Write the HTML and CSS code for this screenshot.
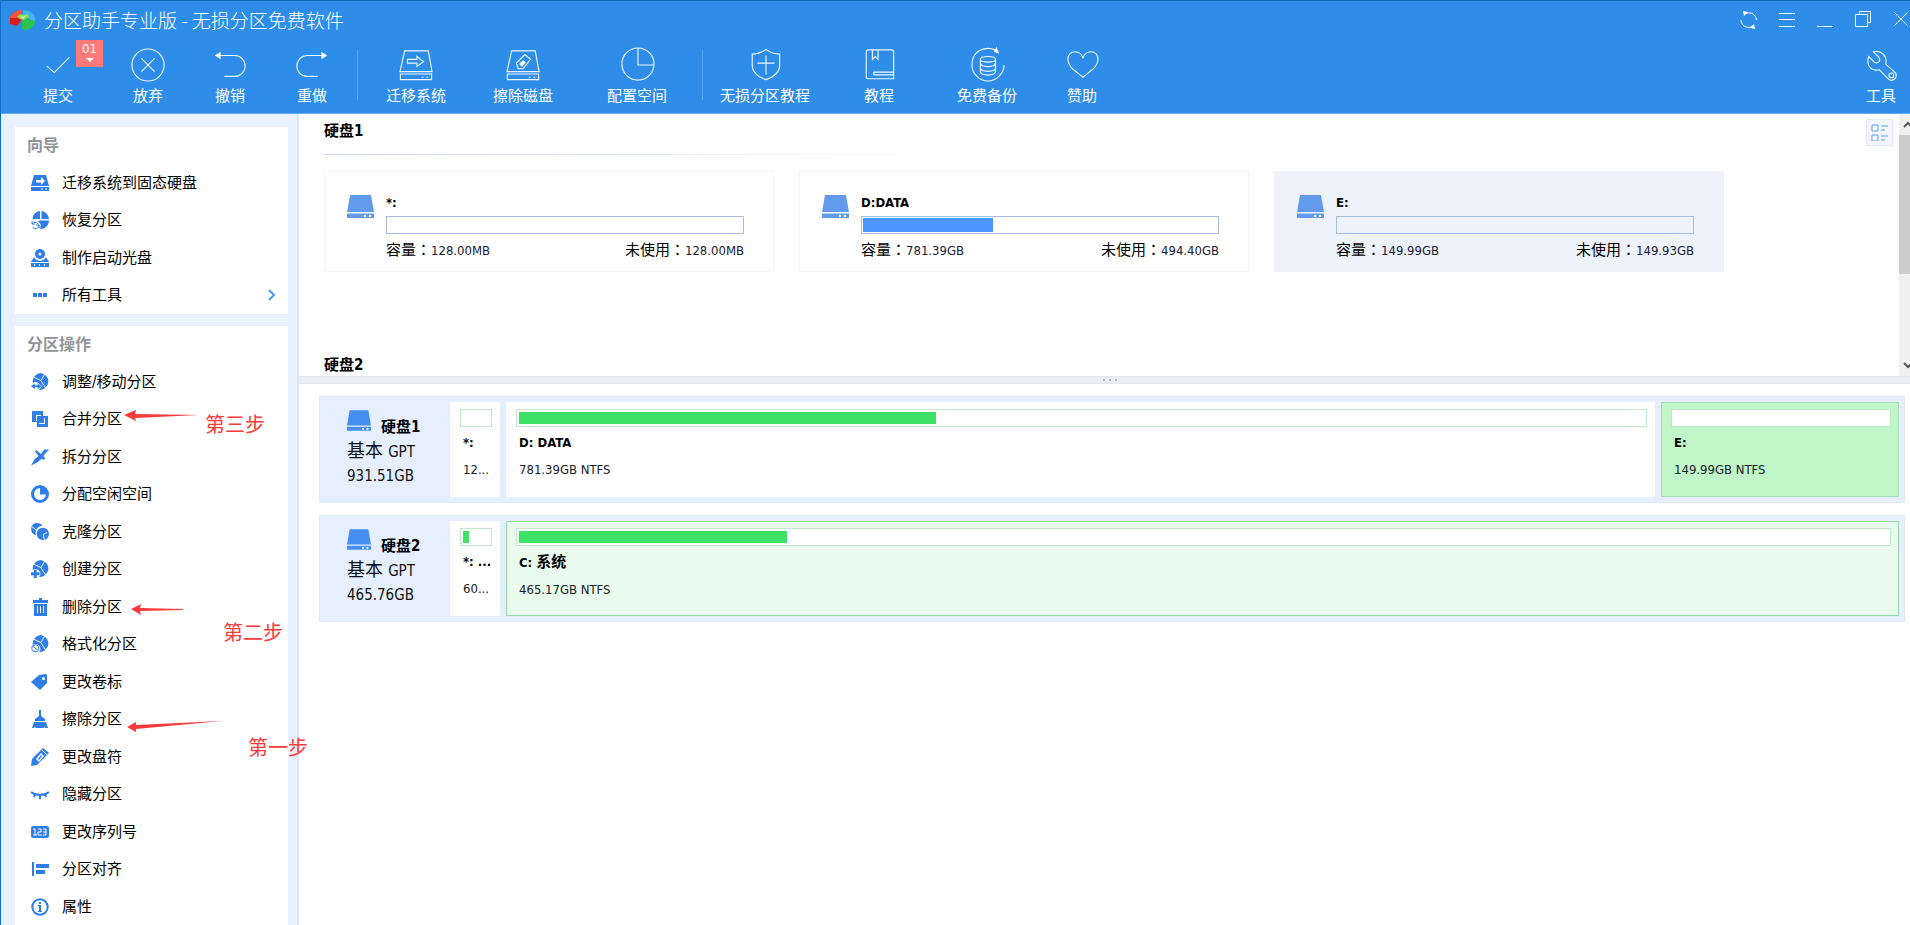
FILE: index.html
```html
<!DOCTYPE html>
<html lang="zh-CN">
<head>
<meta charset="utf-8">
<title>分区助手专业版 - 无损分区免费软件</title>
<link rel="stylesheet" href="styles.css">
</head>
<body>
<svg class="defs" aria-hidden="true">
  <symbol id="drive" viewBox="0 0 27 23"><path fill="currentColor" d="M3 0h21l3 17H0zM0 18.500h27V23H0z"/><path fill="#fff" d="M17 20h2v2h-2zM22 20h2v2h-2z"/></symbol>
  <symbol id="pie" viewBox="0 0 19 19"><path fill="currentColor" d="M10 0a9 9 0 1 1-1.500 18A5 5 0 0 0 2 10.500 9 9 0 0 1 10 0z"/><path d="M14.500 1L10.500 8l3 5 3 4M10.500 8L2 4" fill="none" stroke="#fff" stroke-width="1"/></symbol>
</svg>
<div class="window">
  <header class="header">
    <div class="titlebar">
      <svg class="logo" viewBox="0 0 26 22"><path fill="#d91c1c" d="M0 9C1 4 6 1 12 1v9l-5 7-7-2z"/><path fill="#f4553f" d="M0 9C1 4 6 1 12 1v5L6 9z"/><path fill="#41b4f2" d="M13 1c7 0 12 4 12 9v3l-6-3-6-4z"/><path fill="#2bc24a" d="M13 9l12 3c0 5-4 8-10 9l-3-1v-6z"/><path fill="#8ae04f" d="M7 8l3-3 4 1 4-1 1 3-5 3-4-1z"/><path fill="#e9fbd0" d="M10 7l3 1 3-2-3 4z"/></svg>
      <h1 class="title">分区助手专业版 - 无损分区免费软件</h1>
      <div class="controls">
        <button class="ctl" aria-label="刷新"><svg viewBox="0 0 18 18"><path d="M6 2.500A7.500 7.500 0 0 1 16.500 9M1 9a7.500 7.500 0 0 0 11 6.500"/><path class="solid" d="M3 0l5 1-4 4zM15 18l-5-1 4-4z"/></svg></button>
        <button class="ctl" aria-label="菜单"><svg viewBox="0 0 18 18"><path d="M1 2.500h16M1 8.500h16M1 15.500h16"/></svg></button>
        <button class="ctl" aria-label="最小化"><svg viewBox="0 0 18 18"><path d="M1 15.500h16"/></svg></button>
        <button class="ctl" aria-label="还原"><svg viewBox="0 0 18 18"><path d="M1.500 3.500h12v12h-12zM5.500 3.500v-3h11v11h-3"/></svg></button>
        <button class="ctl" aria-label="关闭"><svg viewBox="0 0 18 18"><path d="M2.500 1.500l13 13M15.500 1.500l-13 13"/></svg></button>
      </div>
    </div>
    <nav class="toolbar">
      <button class="tool"><svg viewBox="0 0 36 36"><path d="M6 19l8 7 16-16"/></svg>提交<span class="badge">01<i></i></span></button>
      <button class="tool"><svg viewBox="0 0 36 36"><circle cx="18" cy="18" r="17"/><path d="M11 11l14 14M25 11L11 25"/></svg>放弃</button>
      <button class="tool"><svg viewBox="0 0 36 36"><path d="M6 8h17a11 11 0 0 1 0 22H12"/><path class="solid" d="M2 8l6-4v8z"/></svg>撤销</button>
      <button class="tool"><svg viewBox="0 0 36 36"><path d="M30 8H13a11 11 0 0 0 0 22h11"/><path class="solid" d="M34 8l-6-4v8z"/></svg>重做</button>
      <span class="divider"></span>
      <button class="tool"><svg viewBox="0 0 36 36"><path d="M6 3h25l4 22H1zM1.500 27.500h33v6h-33zM9 12h10V9l7 5.500-7 5V16H9zM24 31h2M29 31h2"/></svg>迁移系统</button>
      <button class="tool"><svg viewBox="0 0 36 36"><path d="M6 3h25l4 22H1zM1.500 27.500h33v6h-33zM11 16l9-9 6 5-8 10h-5zM24 31h2M29 31h2"/><path class="solid" d="M14 17l4-4 3 2-4 5z"/></svg>擦除磁盘</button>
      <button class="tool"><svg viewBox="0 0 36 36"><circle cx="19" cy="17" r="17"/><path d="M19 0v18h17"/></svg>配置空间</button>
      <span class="divider"></span>
      <button class="tool"><svg viewBox="0 0 36 36"><path d="M19 1.500c4 3 8 5 14.500 5v12c0 7-6 12-14.500 15-8.500-3-14.500-8-14.500-15v-12C11 6.500 15 4.500 19 1.500zM19 8v20M10 16h18"/></svg>无损分区教程</button>
      <button class="tool"><svg viewBox="0 0 36 36"><path d="M33.500 25V4q0-2-2-2h-25q-2 0-2 2v27q0 1.500 2 1.500h27v-7h-21v3h21M11 2v10l3-3 3 3V2"/></svg>教程</button>
      <button class="tool"><svg viewBox="0 0 36 36"><path d="M27 2C13-3 2 5 2 18c0 9 8 17 17 17s17-8 17-17"/><path class="solid" d="M25 4l3-5 3 7z"/><path d="M11 12v13c0 5 16 5 16 0V12c0-4-16-4-16 0 0 4 16 4 16 0M11 16c0 5 16 5 16 0M11 21c0 5 16 5 16 0"/></svg>免费备份</button>
      <button class="tool"><svg viewBox="0 0 36 36"><path d="M19 11C17 2 4 1 3 12c0 8 8 12 16 19 8-7 16-11 16-19C34 1 21 2 19 11z"/></svg>赞助</button>
      <span></span>
      <button class="tool"><svg viewBox="0 0 36 36"><path d="M10 4c8-2 15 4 13 13l10 9a5 5 0 0 1-7 7l-10-10C7 25 2 18 5 9l6 6c4 2 7-1 5-5z"/><circle cx="29" cy="29" r="2.500"/></svg>工具</button>
    </nav>
  </header>

  <div class="body">
    <aside class="sidebar">
      <section class="panel wizard">
        <h2 class="panel-title">向导</h2>
        <ul class="menu">
          <li><button class="item"><svg viewBox="0 0 18 18"><path d="M3 1h12l3 11H0zM0 13h18v4H0z"/><path class="cut" d="M5 6h5V3l4 4-4 4V8.500H5zM10 14.500h2v1h-2zM14 14.500h2v1h-2z"/></svg>迁移系统到固态硬盘</button></li>
          <li><button class="item"><svg viewBox="0 0 18 18"><path d="M9 0v8H1.500A8 8 0 0 1 9 0zM10.500 0A8.500 8.500 0 0 1 18 8h-7.500zM18 9.500A8.500 8.500 0 0 1 9 18l1-4-3-4 2-.5z"/><path class="line" d="M1 13a3.500 3.500 0 0 1 6 0M8 14a3.500 3.500 0 0 1-6.500 2M1 10v3h3M8 17v-3H5"/></svg>恢复分区</button></li>
          <li><button class="item"><svg viewBox="0 0 18 18"><circle cx="9" cy="5" r="5"/><path d="M3 8c2 5 10 5 12 0l3 5H0zM0 14h18v4H0z"/><path class="cut" d="M3 15h1v2H3zM8 15h1v2H8zM13 15h1v2h-1z"/><circle class="cut" cx="9" cy="5" r="1.500"/></svg>制作启动光盘</button></li>
          <li><button class="item"><svg viewBox="0 0 18 18"><path d="M2 7h4v4H2zM7 7h4v4H7zM12 7h4v4h-4z"/></svg>所有工具<svg class="chevron" viewBox="0 0 8 12"><path d="M1 1l5 5-5 5"/></svg></button></li>
        </ul>
      </section>
      <section class="panel">
        <h2 class="panel-title">分区操作</h2>
        <ul class="menu">
          <li><button class="item"><svg viewBox="0 0 19 19"><use href="#pie"/><path class="halo" d="M0 14l4-3v2h3v-2l4 3-4 3v-2H4v2z"/></svg>调整/移动分区</button></li>
          <li><button class="item"><svg viewBox="0 0 18 18"><path d="M1 1h11v11H1z"/><path d="M6 6h11v11H6z"/><path class="cut" d="M5 5h5v1H6v5H5zM13 8v5H8v1h6V8z"/></svg>合并分区</button></li>
          <li><button class="item"><svg viewBox="0 0 19 18"><path d="M14 1h5l-8 9-2-2zM4 3l2-1 9 8-1 2-3-1-5 4-6 3 4-7 4-3z"/></svg>拆分分区</button></li>
          <li><button class="item"><svg viewBox="0 0 18 18"><circle cx="9" cy="9" r="9"/><path class="cut" d="M9 3a6 6 0 1 0 6 6.500H9z"/></svg>分配空闲空间</button></li>
          <li><button class="item"><svg viewBox="0 0 19 19"><path d="M6 0c3 0 5 1 6 3-4 0-8 4-7 10C-2 11-1 0 6 0z"/><circle cx="12.500" cy="11.500" r="6.500"/><path class="cutline" d="M1 4l5 4M13 12l4-2M13 12l1 5"/></svg>克隆分区</button></li>
          <li><button class="item"><svg viewBox="0 0 19 19"><use href="#pie"/><path class="halo" d="M3 10h3v3h3v3H6v3H3v-3H0v-3h3z"/></svg>创建分区</button></li>
          <li><button class="item"><svg viewBox="0 0 18 18"><path d="M8 0h3v2h6v3H2V2h6zM3 6h13v12H3z"/><path class="cutline" d="M6.500 8v7M9.500 8v7M12.500 8v7"/></svg>删除分区</button></li>
          <li><button class="item"><svg viewBox="0 0 19 19"><use href="#pie"/><circle class="disc" cx="4.500" cy="14" r="3.800"/><path class="line" d="M2 12l5 4"/></svg>格式化分区</button></li>
          <li><button class="item"><svg viewBox="0 0 18 18"><path d="M8 2l7-1 1 1v8l-7 7-9-8z"/><circle class="cut" cx="12.500" cy="5.500" r="1.500"/></svg>更改卷标</button></li>
          <li><button class="item"><svg viewBox="0 0 18 18"><path d="M8 0h2v6l4 3v2H4V9l4-3zM3 12h12l2 6h-3l-1-2v2H5l-1-1-1 1H1z"/></svg>擦除分区</button></li>
          <li><button class="item"><svg viewBox="0 0 18 18"><path d="M12 0l6 5L6 17l-6 1 1-7z"/><path class="cut" d="M10 5l3 3-5 6-3-3z"/><path d="M10 7l1 1-3 4-1-1z"/><path class="cutline" d="M11 2l5 5"/></svg>更改盘符</button></li>
          <li><button class="item"><svg viewBox="0 0 18 18"><path class="ring" d="M0 7c5 4 13 4 18 0M4 9l-1 3M14 9l1 3M9 10v4"/></svg>隐藏分区</button></li>
          <li><button class="item"><svg viewBox="0 0 18 18"><rect y="3" width="18" height="12" rx="2"/><path class="cutline" d="M2 6h2v6M2 12h4M7 6h3v3H7v3h4M12 6h3v6h-3M12 9h3"/></svg>更改序列号</button></li>
          <li><button class="item"><svg viewBox="0 0 18 18"><path d="M1 2h2v14H1zM5 4h13v4H5zM5 10h9v4H5z"/></svg>分区对齐</button></li>
          <li><button class="item"><svg viewBox="0 0 18 18"><circle class="ring" cx="9" cy="9" r="7.700"/><path d="M8 4h2v2H8zM7 7h3v6h1v1H7v-1h1V8H7z"/></svg>属性</button></li>
        </ul>
      </section>
    </aside>

    <main class="main">
      <section class="overview">
        <div class="disks">
          <h2 class="disk-title">硬盘1</h2>
          <div class="cards">
            <article class="card">
              <svg class="card-icon"><use href="#drive"/></svg>
              <div class="card-body"><h3 class="name">*:</h3><div class="track"></div>
                <p class="stats"><span>容量<b lang="zh-TW">：</b><em>128.00MB</em></span><span>未使用<b lang="zh-TW">：</b><em>128.00MB</em></span></p></div>
            </article>
            <article class="card">
              <svg class="card-icon"><use href="#drive"/></svg>
              <div class="card-body"><h3 class="name">D:DATA</h3><div class="track"><div class="fill" style="width:36.700%"></div></div>
                <p class="stats"><span>容量<b lang="zh-TW">：</b><em>781.39GB</em></span><span>未使用<b lang="zh-TW">：</b><em>494.40GB</em></span></p></div>
            </article>
            <article class="card selected">
              <svg class="card-icon"><use href="#drive"/></svg>
              <div class="card-body"><h3 class="name">E:</h3><div class="track"></div>
                <p class="stats"><span>容量<b lang="zh-TW">：</b><em>149.99GB</em></span><span>未使用<b lang="zh-TW">：</b><em>149.93GB</em></span></p></div>
            </article>
          </div>
          <h2 class="disk-title">硬盘2</h2>
        </div>
        <button class="view" aria-label="视图"><svg viewBox="0 0 17 17"><path d="M1 1h6v6H1zM1 11h6v6H1zM10 2h7M10 6h4M10 12h7M10 16h4"/></svg></button>
        <div class="scroll"><svg viewBox="0 0 11 21"><path d="M5 13l4-4 4 4"/></svg><div class="thumb"></div><svg viewBox="0 0 11 21"><path d="M5 8l4 4 4-4"/></svg></div>
      </section>
      <div class="splitter"><i></i><i></i><i></i></div>
      <section class="maps">
        <div class="map">
          <div class="info">
            <h3 class="info-name"><svg class="info-icon"><use href="#drive"/></svg>硬盘1</h3>
            <p class="kind">基本 <em>GPT</em></p><p class="size">931.51GB</p>
          </div>
          <div class="seg tiny"><div class="bar"></div><h4 class="name">*:</h4><p>12...</p></div>
          <div class="seg data"><div class="bar"><div class="used" style="width:37.100%"></div></div><h4 class="name">D: DATA</h4><p>781.39GB NTFS</p></div>
          <div class="seg extra active"><div class="bar"></div><h4 class="name">E:</h4><p>149.99GB NTFS</p></div>
        </div>
        <div class="map">
          <div class="info">
            <h3 class="info-name"><svg class="info-icon"><use href="#drive"/></svg>硬盘2</h3>
            <p class="kind">基本 <em>GPT</em></p><p class="size">465.76GB</p>
          </div>
          <div class="seg tiny"><div class="bar"><div class="used" style="width:22%"></div></div><h4 class="name">*: ...</h4><p>60...</p></div>
          <div class="seg data system"><div class="bar"><div class="used" style="width:19.600%"></div></div><h4 class="name">C: <span class="cn">系统</span></h4><p>465.17GB NTFS</p></div>
        </div>
      </section>
    </main>
  </div>

  <svg class="arrow third" viewBox="0 0 76 12"><path d="M0 5l12-5-1 4 64 1-64 3 1 3z"/></svg><span class="note note-third">第三步</span>
  <svg class="arrow second" viewBox="0 0 76 12"><path d="M0 6l10-5-1 4 43 1v1L9 8l1 4z"/></svg><span class="note note-second">第二步</span>
  <svg class="arrow first" viewBox="0 0 96 12"><path d="M0 7l9-5v3l86-4L9 9v3z"/></svg><span class="note note-first">第一步</span>
</div>
</body>
</html>
```
FILE: styles.css
```css
* { box-sizing: border-box; }
body, h1, h2, h3, h4, p, ul { margin: 0; padding: 0; }
body { font: 15px/20px "DejaVu Sans Condensed", "Noto Sans CJK SC", sans-serif; color: #000; background: #fff; }
ul { list-style: none; }
em { font-style: normal; }
button { font: inherit; color: inherit; background: none; border: 0; padding: 0; }
.defs { position: absolute; width: 0; height: 0; }

.window { position: relative; height: 100vh; overflow: hidden; display: flex; flex-direction: column; border-left: 1px solid #0d70c4; }

.header { background: #2e8de8; color: #fff; border-top: 1px solid #0c69b8; border-bottom: 1px solid #62adf5; }
.titlebar { display: flex; align-items: center; height: 38px; padding-left: 9px; }
.logo { width: 26px; height: 22px; }
.title { margin-left: 8px; font: 300 19px/28px "Noto Sans CJK SC", sans-serif; flex: 1; }
.controls { display: flex; gap: 20px; }
.ctl { width: 18px; height: 18px; }
.ctl svg { display: block; width: 18px; height: 18px; fill: none; stroke: #fff; }
.header .solid { fill: #fff; stroke: none; }

.toolbar { display: grid; grid-template-columns: 90px 90px 74px 90px 1px 116px 98px 130px 1px 124px 104px 112px 78px 1fr 58px; padding-left: 12px; height: 74px; }
.tool { position: relative; display: flex; flex-direction: column; align-items: center; justify-content: flex-start; gap: 4px; padding-top: 9px; white-space: nowrap; }
.tool svg { width: 34px; height: 34px; overflow: visible; fill: none; stroke: #eef7ff; stroke-width: 1.2; }
.divider { background: #5aa6f0; height: 50px; margin-top: 11px; }
.badge { position: absolute; left: 63px; top: 1px; width: 27px; height: 27px; background: #fd7a78; font-size: 13px; line-height: 17px; }
.badge i { display: block; width: 8px; margin: 1px auto 0; border: 4px solid transparent; border-top-color: #fff; border-bottom: 0; }

.body { flex: 1; min-height: 0; display: flex; }
.sidebar { width: 298px; padding: 13px 9px 0 14px; background: #e9f1fe; border-right: 2px solid #dfe6f3; display: flex; flex-direction: column; gap: 12px; overflow: hidden; }
.panel { background: #fff; flex: none; padding-bottom: 20px; }
.wizard { padding-bottom: 0; }
.panel-title { font-size: 16px; line-height: 20px; font-weight: 700; color: #909599; padding: 9px 12px 8px; }
.menu li { height: 37px; }
.menu li:nth-child(even) { height: 38px; }
.item { display: flex; align-items: center; gap: 13px; width: 100%; height: 100%; padding: 0 12px 0 16px; text-align: left; }
.item svg { width: 18px; height: 18px; fill: #2f7de8; color: #2f7de8; overflow: visible; }
.item .cut { fill: #fff; }
.item .cutline { fill: none; stroke: #fff; stroke-width: 1; }
.item .line { fill: none; stroke: #2f7de8; stroke-width: 1; }
.item .ring { fill: none; stroke: #2f7de8; stroke-width: 2; }
.item .halo { stroke: #fff; stroke-width: 1; paint-order: stroke; }
.item .disc { fill: #fff; stroke: #2f7de8; }
.item .chevron { width: 8px; height: 12px; margin-left: auto; fill: none; stroke: #479bf8; stroke-width: 2; }

.main { flex: 1; min-width: 0; display: flex; flex-direction: column; }
.overview { display: flex; align-items: flex-start; height: 262px; overflow: hidden; }
.disks { flex: 1; padding: 7px 0 0 25px; }
.disk-title { font-size: 15px; line-height: 20px; }
.cards { display: flex; gap: 25px; padding: 17px 0 83px; margin-top: 13px; background: linear-gradient(90deg, #c8d5ea, #fff) 0 0 / 640px 1px no-repeat; }
.card { display: flex; gap: 12px; width: 450px; height: 101px; padding: 22px 29px 0 22px; border: 1px solid #f3f5fb; }
.selected { background: #edf2fb; border-color: #edf2fb; }
.card-icon { width: 27px; height: 23px; margin-top: 1px; color: #629beb; flex: none; }
.card-body { flex: 1; }
.name { font-size: 13px; line-height: 18px; font-weight: 700; white-space: nowrap; }
.card .name { height: 22px; }
.track { height: 18px; padding: 1px; border: 1px solid #a3bde3; }
.fill { height: 100%; background: #4c97ff; }
.stats { display: flex; justify-content: space-between; margin-top: 5px; }
.stats b { font: 15px/20px "Noto Sans CJK TC", sans-serif; }
.stats em { font-size: 13px; color: #182038; }
.view { width: 27px; height: 27px; margin: 5px 6px 0 0; padding: 4px; background: #f2f6fd; border: 1px solid #e3e9f4; }
.view svg { display: block; width: 17px; height: 17px; fill: none; stroke: #629ef2; }
.scroll { width: 11px; height: 100%; background: #f0f0f0; display: flex; flex-direction: column; overflow: hidden; }
.scroll svg { width: 11px; height: 21px; fill: none; stroke: #555; stroke-width: 2; }
.scroll svg:last-child { margin-top: auto; }
.thumb { height: 139px; background: #cdcdcd; }

.splitter { display: flex; align-items: center; justify-content: center; gap: 4px; height: 8px; padding-left: 10px; background: #e9edf6; border: solid #e0e6ef; border-width: 1px 0; }
.splitter i { width: 2px; height: 2px; background: #a9b6c9; }

.maps { flex: 1; display: flex; flex-direction: column; gap: 12px; padding: 12px 5px 0 20px; }
.map { display: flex; gap: 6px; height: 107px; padding: 5px; background: #e5efff; border: 1px solid #dfe9f7; }
.info { width: 119px; padding: 8px 0 0 22px; }
.info-name { display: flex; gap: 10px; height: 29px; font-size: 15px; line-height: 34px; }
.info-icon { width: 24px; height: 21px; color: #458ef0; }
.kind { font-size: 18px; line-height: 24px; color: #111; }
.kind em { font-size: 15px; }
.size { font-size: 15px; line-height: 24px; color: #111; }
.seg { background: #fff; padding: 6px 7px 0 9px; border: 1px solid #fff; min-width: 0; }
.tiny { width: 50px; }
.data { flex: 1131 1 0; }
.extra { flex: 220 1 0; }
.bar { height: 18px; padding: 2px; background: #fff; border: 1px solid #bfe8c8; }
.used { height: 100%; background: #3ce165; }
.seg .name { margin: 7px 0 0 3px; }
.seg p { margin: 8px 0 0 3px; font-size: 13px; line-height: 20px; color: #182028; white-space: nowrap; }
.cn { font-size: 15px; }
.active { background: #c1f6c9; border-color: #a5dfb0; }
.system { background: #e8fbec; border-color: #98dca6; }

.arrow { position: absolute; width: 76px; height: 12px; fill: #fb3a3a; }
.note { position: absolute; font-size: 20px; line-height: 24px; color: #fb3a3a; }
.third { left: 123px; top: 410px; }
.second { left: 130px; top: 603px; }
.first { left: 126px; top: 720px; width: 96px; }
.note-third { left: 204px; top: 413px; }
.note-second { left: 222px; top: 621px; }
.note-first { left: 247px; top: 736px; }
```
